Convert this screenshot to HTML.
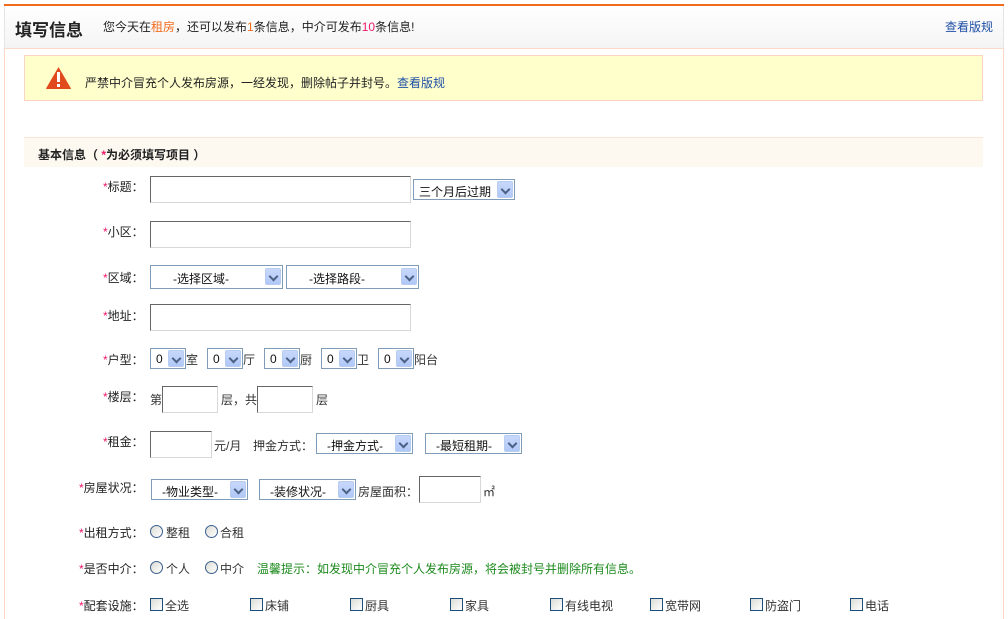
<!DOCTYPE html>
<html><head><meta charset="utf-8"><style>
*{margin:0;padding:0;box-sizing:border-box}
body{width:1008px;height:617px;overflow:hidden;background:#fff;font:12px "Liberation Sans","Noto Sans CJK SC","WenQuanYi Zen Hei",sans-serif;color:#333;position:relative}
.a{position:absolute;white-space:nowrap}
.top{left:4px;top:4px;width:1000px;height:2px;background:#f26b1d}
.hdr{left:4px;top:6px;width:1000px;height:43px;background:linear-gradient(#fff,#f4f4f4);border-left:1px solid #e5e5e5;border-right:1px solid #e5e5e5;border-bottom:1px solid #fbd8c8}
.frame{left:4px;top:49px;width:1000px;height:570px;border-left:1px solid #fbd8c8;border-right:1px solid #fbd8c8}
.t1{left:15px;top:16px;font-size:17px;font-weight:bold;color:#222}
.t2{left:103px;top:18px;color:#222}
.o{color:#f26b1d}.p{color:#f0186a}
.lnk{color:#1f4fa5}
.warn{left:24px;top:55px;width:959px;height:46px;background:#ffffcc;border:1px solid #fbd4c4}
.sec{left:24px;top:137px;width:959px;height:30px;background:#fdf9f1;border-top:1px solid #fbe3d8;font-weight:bold;color:#222;padding:8px 0 0 14px}
.r{color:#f0186a}
.inp{position:absolute;background:#fff;border:1px solid #d8d8d8;border-top-color:#666;border-left-color:#666}
.sel{position:absolute;background:#fff;border:1px solid #7f9db9;height:21px;color:#111}
.sel span{position:absolute;top:3px}
.sel i{position:absolute;right:1px;top:1px;width:16px;height:17px;background:linear-gradient(#c8d8fb,#b0c8f8);border:1px solid #b8ccf0;border-radius:2px}
.sel i:after{content:"";position:absolute;left:4px;top:4px;width:5px;height:5px;border-right:2px solid #4d6185;border-bottom:2px solid #4d6185;transform:rotate(45deg)}
.lb{position:absolute;text-align:right;color:#222}
.rad{position:absolute;width:13px;height:13px;border:1px solid #3a5f8e;border-radius:50%;background:linear-gradient(135deg,#dcdcd4,#fff)}
.cb{position:absolute;width:13px;height:13px;border:1px solid #1c4f80;background:linear-gradient(135deg,#dcdcd4,#fff)}
</style></head><body>
<div class="a frame"></div>
<div class="a top"></div>
<div class="a hdr"></div>
<div class="a t1">填写信息</div>
<div class="a t2">您今天在<span class="o">租房</span>，还可以发布<span class="o">1</span>条信息，中介可发布<span class="p">10</span>条信息!</div>
<div class="a lnk" style="left:945px;top:18px">查看版规</div>
<div class="a warn"></div>
<svg class="a" style="left:45px;top:66px" width="27" height="24" viewBox="0 0 27 24"><path d="M13.5 1 L26 22.5 Q26 23 25 23 L2 23 Q1 23 1 22.5Z" fill="#e04a1c"/><rect x="12" y="6" width="3" height="10" fill="#fff"/><rect x="12" y="18" width="3" height="3" fill="#fff"/></svg>
<div class="a" style="left:85px;top:74px;color:#222">严禁中介冒充个人发布房源，一经发现，删除帖子并封号。<span class="lnk">查看版规</span></div>
<div class="a sec">基本信息（ <span class="r">*</span>为必须填写项目 ）</div>

<div class="lb a" style="left:103px;top:178px"><span class="r">*</span>标题：</div>
<div class="inp" style="left:150px;top:176px;width:261px;height:27px"></div>
<div class="sel" style="left:413px;top:179px;width:102px"><span style="left:5px">三个月后过期</span><i></i></div>

<div class="lb a" style="left:103px;top:223px"><span class="r">*</span>小区：</div>
<div class="inp" style="left:150px;top:221px;width:261px;height:27px"></div>

<div class="lb a" style="left:103px;top:269px"><span class="r">*</span>区域：</div>
<div class="sel" style="left:150px;top:265px;width:133px;height:24px"><span style="left:22px;top:4px">-选择区域-</span><i style="top:2px"></i></div>
<div class="sel" style="left:286px;top:265px;width:133px;height:24px"><span style="left:22px;top:4px">-选择路段-</span><i style="top:2px"></i></div>

<div class="lb a" style="left:103px;top:307px"><span class="r">*</span>地址：</div>
<div class="inp" style="left:150px;top:304px;width:261px;height:27px"></div>

<div class="lb a" style="left:103px;top:351px"><span class="r">*</span>户型：</div>
<div class="sel" style="left:150px;top:348px;width:36px"><span style="left:5px">0</span><i></i></div><div class="a" style="left:186px;top:351px">室</div>
<div class="sel" style="left:207px;top:348px;width:36px"><span style="left:5px">0</span><i></i></div><div class="a" style="left:243px;top:351px">厅</div>
<div class="sel" style="left:264px;top:348px;width:36px"><span style="left:5px">0</span><i></i></div><div class="a" style="left:300px;top:351px">厨</div>
<div class="sel" style="left:321px;top:348px;width:36px"><span style="left:5px">0</span><i></i></div><div class="a" style="left:357px;top:351px">卫</div>
<div class="sel" style="left:378px;top:348px;width:36px"><span style="left:5px">0</span><i></i></div><div class="a" style="left:414px;top:351px">阳台</div>

<div class="lb a" style="left:103px;top:388px"><span class="r">*</span>楼层：</div>
<div class="a" style="left:150px;top:391px">第</div>
<div class="inp" style="left:162px;top:386px;width:56px;height:27px"></div>
<div class="a" style="left:221px;top:391px">层，共</div>
<div class="inp" style="left:257px;top:386px;width:56px;height:27px"></div>
<div class="a" style="left:316px;top:391px">层</div>

<div class="lb a" style="left:103px;top:433px"><span class="r">*</span>租金：</div>
<div class="inp" style="left:150px;top:431px;width:62px;height:27px"></div>
<div class="a" style="left:214px;top:437px">元/月</div>
<div class="a" style="left:253px;top:437px">押金方式：</div>
<div class="sel" style="left:316px;top:433px;width:97px"><span style="left:10px">-押金方式-</span><i></i></div>
<div class="sel" style="left:425px;top:433px;width:97px"><span style="left:10px">-最短租期-</span><i></i></div>

<div class="lb a" style="left:79px;top:479px"><span class="r">*</span>房屋状况：</div>
<div class="sel" style="left:151px;top:479px;width:97px"><span style="left:10px">-物业类型-</span><i></i></div>
<div class="sel" style="left:259px;top:479px;width:97px"><span style="left:10px">-装修状况-</span><i></i></div>
<div class="a" style="left:358px;top:483px">房屋面积：</div>
<div class="inp" style="left:419px;top:476px;width:62px;height:27px"></div>
<div class="a" style="left:483px;top:483px">㎡</div>

<div class="lb a" style="left:79px;top:524px"><span class="r">*</span>出租方式：</div>
<div class="rad" style="left:150px;top:525px"></div><div class="a" style="left:166px;top:524px">整租</div>
<div class="rad" style="left:205px;top:525px"></div><div class="a" style="left:220px;top:524px">合租</div>

<div class="lb a" style="left:79px;top:560px"><span class="r">*</span>是否中介：</div>
<div class="rad" style="left:150px;top:561px"></div><div class="a" style="left:166px;top:560px">个人</div>
<div class="rad" style="left:205px;top:561px"></div><div class="a" style="left:220px;top:560px">中介</div>
<div class="a" style="left:257px;top:560px;color:#1d8a1d">温馨提示：如发现中介冒充个人发布房源，将会被封号并删除所有信息。</div>

<div class="lb a" style="left:79px;top:597px"><span class="r">*</span>配套设施：</div>
<div class="cb" style="left:150px;top:598px"></div><div class="a" style="left:165px;top:597px">全选</div>
<div class="cb" style="left:250px;top:598px"></div><div class="a" style="left:265px;top:597px">床铺</div>
<div class="cb" style="left:350px;top:598px"></div><div class="a" style="left:365px;top:597px">厨具</div>
<div class="cb" style="left:450px;top:598px"></div><div class="a" style="left:465px;top:597px">家具</div>
<div class="cb" style="left:550px;top:598px"></div><div class="a" style="left:565px;top:597px">有线电视</div>
<div class="cb" style="left:650px;top:598px"></div><div class="a" style="left:665px;top:597px">宽带网</div>
<div class="cb" style="left:750px;top:598px"></div><div class="a" style="left:765px;top:597px">防盗门</div>
<div class="cb" style="left:850px;top:598px"></div><div class="a" style="left:865px;top:597px">电话</div>
</body></html>
